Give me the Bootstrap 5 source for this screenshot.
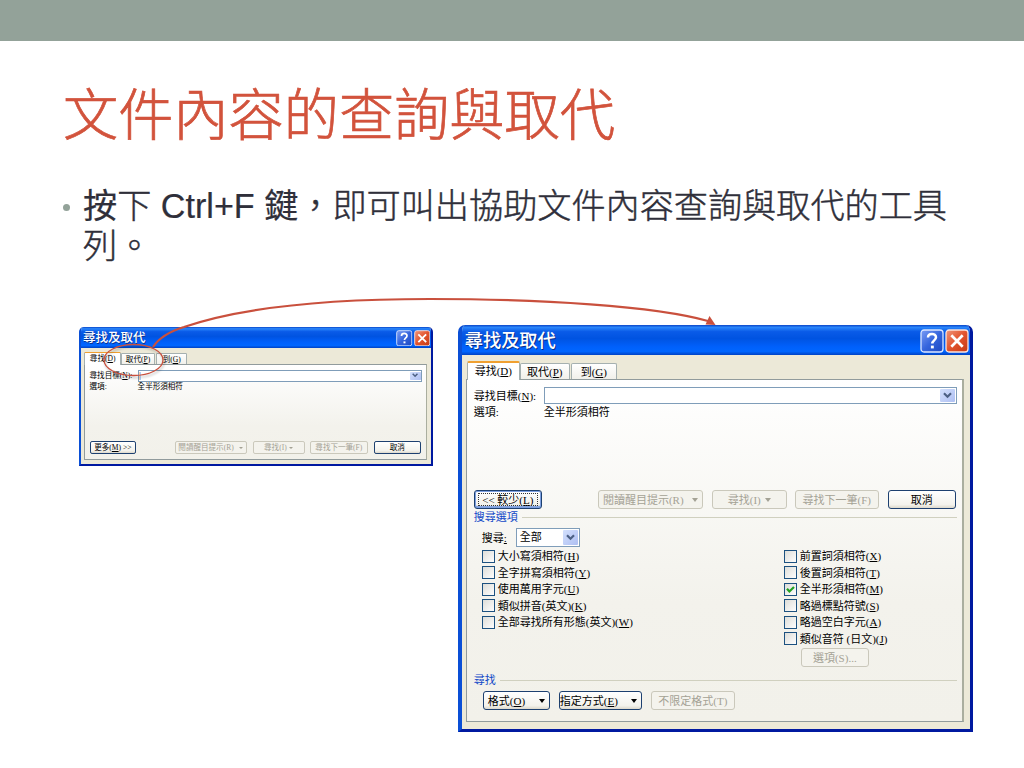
<!DOCTYPE html>
<html lang="zh-Hant">
<head>
    <meta charset="UTF-8">
    <meta name="viewport" content="width=device-width, initial-scale=1.0">
    <title>文件內容的查詢與取代</title>
    <link href="https://cdn.jsdelivr.net/npm/bootstrap@5.3.0/dist/css/bootstrap.min.css" rel="stylesheet">
    <style>
        body { width: 1024px; height: 768px; font-family: "Liberation Sans", "Noto Sans CJK TC", sans-serif; color: #2f2f3a; }
        .top-band { height: 41px; background: #93a299; }
        .slide-title { font-size: 55.2px; line-height: 66px; font-weight: 300; color: #d2533c; margin: 42px 0 0 63px; height: 66px; -webkit-text-stroke: .7px #d2533c; }
        .slide-text { margin: 37px 0 0 62px; height: 80px; font-size: 34.15px; line-height: 40px; font-weight: 300; width: 900px; -webkit-text-stroke: .45px #2f2f3a; }
        .slide-text b { font-weight: 400; -webkit-text-stroke: .2px #2f2f3a; }
        .bullet { width: 7px; height: 7px; border-radius: 50%; background: #93a299; margin: 18px 13px 0 1px; }
        .shots { margin: 59px 0 0 79px; gap: 25px; }

        /* XP dialog */
        .xp { width: 515px; height: 407px; background: #ece9d8; border: solid #0a4fd6; border-width: 0 3px 3px 4px; border-right-color: #0019a0; border-bottom-color: #0019a0; border-radius: 7px 7px 0 0; overflow: hidden; color: #000;
              font: 11px/14px "Liberation Serif", "Noto Sans CJK TC", serif; white-space: nowrap; }
        .xp-mini { zoom: .687; height: 202px; margin-top: 3px; }
        .xp-title { height: 30px; margin: 0 -3px 0 -4px; padding: 2px 3px 0 7px; font-size: 18.2px; line-height: 29px; font-weight: 500; color: #fff; text-shadow: 1px 1px #0a2f8c;
                    background: linear-gradient(#0a46c8 0, #2a86fb 8%, #0a5be8 22%, #0053e1 45%, #0060fb 72%, #0066ff 88%, #0042c4 100%); }
        .xp-mini .xp-title { line-height: 31px; }
        .xp-title svg { width: 24px; height: 24px; display: block; margin-top: 2px; margin-right: 1px; }
        .xp-tabs { height: 24px; padding: 6px 0 0 5px; }
        .xp-tab { height: 16px; margin: 2px 1px 0 0; border: 1px solid #a5b0b0; border-bottom: 0; border-radius: 2px 2px 0 0; background: linear-gradient(#fff, #f1f0ea); text-align: center; line-height: 17px; }
        .xp-tab.on { height: 19px; margin: 0; border-top: 2px solid #f0a030; background: #fff; z-index: 1; }
        .t1 { width: 53px; } .t2 { width: 50px; } .t3 { width: 46px; }
        .xp-pane { margin: 0 6px 0 4px; height: 343px; border: 1px solid #919b9c; border-right: 2px solid #aaae9f; background: linear-gradient(#fff, #f3f2ec 65%, #f2f1ea); padding: 7px 5px 0 7px; }
        .xp-mini .xp-pane { height: 139px; }
        .lbl { width: 70px; }
        .xp-find { height: 17px; line-height: 12px; }
        .xp-field { height: 17px; border: 1px solid #7f9db9; background: #fff; padding: 1px; }
        .drop { width: 15px; background: linear-gradient(135deg, #d3e0fd, #aebff2); border-radius: 1px; }
        .drop svg { width: 9px; height: 7px; }
        .xp-opt { height: 16px; }
        .xp-btns { margin-top: 70px; }
        .xb { height: 19px; border: 1px solid #1d4070; border-radius: 3px; background: linear-gradient(#fff, #f3f2ec 80%, #dcd8cb); display: flex; align-items: center; justify-content: center; }
        .xp-mini .xb { padding-top: 2px; }
        .xb.off { color: #a4a295; border-color: #cac8bb; background: #f4f3ed; }
        .xb.hot { box-shadow: inset 0 0 0 1px #7d9fe0, inset 0 -2px 1px #7d9fe0; position: relative; }
        .xb.hot::after { content: ""; position: absolute; inset: 2px 3px; border: 1px dotted #333; }
        .b-more { width: 68px; margin-right: 56px; }
        .b-hilite { width: 105px; margin-right: 9px; }
        .b-find { width: 75px; margin-right: 8px; }
        .b-next { width: 84px; margin-right: 9px; }
        .b-cancel { width: 68px; }
        .b-options { width: 68px; margin: 1px 0 0 17px; }
        .b-format { width: 67px; }
        .b-special { width: 83px; }
        .b-clear { width: 84px; }
        .tri { border: 3px solid transparent; border-top: 4px solid; border-bottom: 0; width: 0; height: 0; }
        .group-line { color: #1048c8; height: 16px; }
        .group-line span { height: 1px; background: #d0d0bf; }
        .group-find { margin-top: 5px; }
        .search-row { margin: 3px 0 0 8px; }
        .search-lbl { width: 34px; }
        .search-field { width: 64px; height: 19px; }
        .search-val { padding-left: 2px; }
        .checks { margin: 1px 0 0 8px; }
        .checks-left { width: 302px; }
        .chk { height: 16.5px; gap: 3px; }
        .chk svg { width: 13px; height: 13px; flex: none; }
        .format-row { margin: 3px 0 0 9px; gap: 9px; }
        .arrow-layer { position: absolute; left: 0; top: 0; z-index: 5; pointer-events: none; }
        .ring { filter: drop-shadow(1px 2px 1px rgba(0, 0, 0, .25)); }
    </style>
</head>
<body class="bg-white overflow-hidden position-relative">
    <svg width="0" height="0" class="position-absolute">
        <defs>
            <linearGradient id="gBlue" x2="1" y2="1"><stop stop-color="#7b9df5"/><stop offset=".5" stop-color="#3565dd"/><stop offset="1" stop-color="#1d48c0"/></linearGradient>
            <linearGradient id="gRed" x2="1" y2="1"><stop stop-color="#f0977c"/><stop offset=".5" stop-color="#e2532c"/><stop offset="1" stop-color="#c43a14"/></linearGradient>
            <linearGradient id="gBox" x2="1" y2="1"><stop stop-color="#dcdcd7"/><stop offset="1" stop-color="#fff"/></linearGradient>
        </defs>
        <symbol id="help" viewBox="0 0 24 24"><rect x="1" y="1" width="22" height="22" rx="3" fill="url(#gBlue)" stroke="#dbe6ff" stroke-width="1.3"/><path d="M8 8.6C8 3.8 16 3.9 16 8.3c0 3-3.7 3.1-3.7 6.2" fill="none" stroke="#fff" stroke-width="2.5"/><rect x="10.9" y="16.6" width="2.9" height="2.8" fill="#fff"/></symbol>
        <symbol id="close" viewBox="0 0 24 24"><rect x="1" y="1" width="22" height="22" rx="3" fill="url(#gRed)" stroke="#fbe3dc" stroke-width="1.3"/><path d="M6.3 6.3l11.4 11.4M17.7 6.3L6.3 17.7" stroke="#fff" stroke-width="2.7"/></symbol>
        <symbol id="chev" viewBox="0 0 9 7"><path d="M1 1.2l3.5 3.5L8 1.2" fill="none" stroke="#4d6185" stroke-width="2.2"/></symbol>
        <symbol id="box" viewBox="0 0 13 13"><rect x=".5" y=".5" width="12" height="12" fill="url(#gBox)" stroke="#1c5180"/></symbol>
    </svg>

    <div class="top-band"></div>
    <h1 class="slide-title">文件內容的查詢與取代</h1>
    <div class="slide-text d-flex">
        <div class="bullet flex-shrink-0"></div>
        <div class="text-nowrap">
            <div><b>按</b><span>下 </span><b>Ctrl+F 鍵</b><span>，即可叫出協助文件內容查詢與取代的工具</span></div>
            <div>列。</div>
        </div>
    </div>

    <div class="shots d-flex align-items-start">
        <div class="xp xp-mini flex-shrink-0">
            <div class="xp-title d-flex"><span class="me-auto">尋找及取代</span><svg><use href="#help"/></svg><svg><use href="#close"/></svg></div>
            <div class="xp-tabs d-flex"><div class="xp-tab on t1">尋找(<u>D</u>)</div><div class="xp-tab t2">取代(<u>P</u>)</div><div class="xp-tab t3">到(<u>G</u>)</div></div>
            <div class="xp-pane">
                <div class="xp-find d-flex align-items-center"><div class="lbl">尋找目標(<u>N</u>):</div><div class="xp-field flex-fill d-flex justify-content-between"><span>|</span><div class="drop d-flex align-items-center justify-content-center"><svg><use href="#chev"/></svg></div></div></div>
                <div class="xp-opt d-flex align-items-center"><div class="lbl">選項:</div><div>全半形須相符</div></div>
                <div class="xp-btns d-flex">
                    <div class="xb b-more"><span>更多(<u>M</u>) &gt;&gt;</span></div>
                    <div class="xb off b-hilite">閱讀醒目提示(R)<i class="tri ms-2"></i></div>
                    <div class="xb off b-find">尋找(I)<i class="tri ms-1"></i></div>
                    <div class="xb off b-next">尋找下一筆(F)</div>
                    <div class="xb b-cancel">取消</div>
                </div>
            </div>
        </div>

        <div class="xp flex-shrink-0">
            <div class="xp-title d-flex"><span class="me-auto">尋找及取代</span><svg><use href="#help"/></svg><svg><use href="#close"/></svg></div>
            <div class="xp-tabs d-flex"><div class="xp-tab on t1">尋找(<u>D</u>)</div><div class="xp-tab t2">取代(<u>P</u>)</div><div class="xp-tab t3">到(<u>G</u>)</div></div>
            <div class="xp-pane">
                <div class="xp-find d-flex align-items-center"><div class="lbl">尋找目標(<u>N</u>):</div><div class="xp-field flex-fill d-flex justify-content-end"><div class="drop d-flex align-items-center justify-content-center"><svg><use href="#chev"/></svg></div></div></div>
                <div class="xp-opt d-flex align-items-center"><div class="lbl">選項:</div><div>全半形須相符</div></div>
                <div class="xp-btns d-flex">
                    <div class="xb hot b-more"><span>&lt;&lt; 較少(<u>L</u>)</span></div>
                    <div class="xb off b-hilite">閱讀醒目提示(R)<i class="tri ms-2"></i></div>
                    <div class="xb off b-find">尋找(I)<i class="tri ms-1"></i></div>
                    <div class="xb off b-next">尋找下一筆(F)</div>
                    <div class="xb b-cancel">取消</div>
                </div>
                <div class="group-line d-flex align-items-center">搜尋選項<span class="flex-fill ms-1"></span></div>
                <div class="search-row d-flex align-items-center"><div class="search-lbl">搜尋<u>:</u></div><div class="xp-field search-field d-flex justify-content-between"><div class="search-val">全部</div><div class="drop d-flex align-items-center justify-content-center"><svg><use href="#chev"/></svg></div></div></div>
                <div class="checks d-flex">
                    <div class="checks-left">
                        <div class="chk d-flex align-items-center"><svg><use href="#box"/></svg><span>大小寫須相符(<u>H</u>)</span></div>
                        <div class="chk d-flex align-items-center"><svg><use href="#box"/></svg><span>全字拼寫須相符(<u>Y</u>)</span></div>
                        <div class="chk d-flex align-items-center"><svg><use href="#box"/></svg><span>使用萬用字元(<u>U</u>)</span></div>
                        <div class="chk d-flex align-items-center"><svg><use href="#box"/></svg><span>類似拼音(英文)(<u>K</u>)</span></div>
                        <div class="chk d-flex align-items-center"><svg><use href="#box"/></svg><span>全部尋找所有形態(英文)(<u>W</u>)</span></div>
                    </div>
                    <div>
                        <div class="chk d-flex align-items-center"><svg><use href="#box"/></svg><span>前置詞須相符(<u>X</u>)</span></div>
                        <div class="chk d-flex align-items-center"><svg><use href="#box"/></svg><span>後置詞須相符(<u>T</u>)</span></div>
                        <div class="chk d-flex align-items-center"><svg viewBox="0 0 13 13"><use href="#box"/><path d="M3 5.8l2.4 2.7L10 4" fill="none" stroke="#21a121" stroke-width="2.2"/></svg><span>全半形須相符(<u>M</u>)</span></div>
                        <div class="chk d-flex align-items-center"><svg><use href="#box"/></svg><span>略過標點符號(<u>S</u>)</span></div>
                        <div class="chk d-flex align-items-center"><svg><use href="#box"/></svg><span>略過空白字元(<u>A</u>)</span></div>
                        <div class="chk d-flex align-items-center"><svg><use href="#box"/></svg><span>類似音符 (日文)(<u>J</u>)</span></div>
                        <div class="xb off b-options">選項(S)...</div>
                    </div>
                </div>
                <div class="group-line group-find d-flex align-items-center">尋找<span class="flex-fill ms-1"></span></div>
                <div class="format-row d-flex">
                    <div class="xb b-format justify-content-between ps-1 pe-1"><span>格式(<u>O</u>)</span><i class="tri"></i></div>
                    <div class="xb b-special justify-content-between pe-1"><span>指定方式(<u>E</u>)</span><i class="tri"></i></div>
                    <div class="xb off b-clear">不限定格式(T)</div>
                </div>
            </div>
        </div>
    </div>

    <!-- callout: ellipse on the second tab and the arrow to the big dialog -->
    <svg class="arrow-layer" width="1024" height="768" fill="none" stroke="#c9503d">
        <ellipse class="ring" cx="133.5" cy="360" rx="29.5" ry="15.5" stroke-width="1.3"/>
        <path d="M153 347C159 338 171 331 184 327C245 306 335 299 430 299C540 299 655 306 708 321" stroke-width="2.2"/>
        <path d="M715.500 325l-10-.5 4-8.500z" fill="#c9503d" stroke="none"/>
    </svg>
    <script src="https://cdn.jsdelivr.net/npm/bootstrap@5.3.0/dist/js/bootstrap.bundle.min.js"></script>
</body>
</html>
